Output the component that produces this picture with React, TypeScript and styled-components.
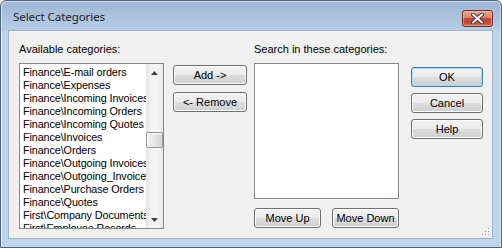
import React from "react";
import styled, { createGlobalStyle } from "styled-components";

const Global = createGlobalStyle`
  html, body { margin: 0; padding: 0; background: #ffffff; }
  body { width: 502px; height: 248px; overflow: hidden; }
`;

const Window = styled.div`
  box-sizing: border-box;
  width: 502px;
  height: 248px;
  border: 1px solid #4e6478;
  border-radius: 6px 6px 0 0;
  background: linear-gradient(#9eb6d3 0px, #b6cde7 29px, #bdd4ec 30px, #bfd5ed 100%);
  box-shadow: inset 1px 1px 0 rgba(255, 255, 255, 0.55), inset -1px 0 0 rgba(255, 255, 255, 0.4);
  display: flex;
  flex-direction: column;
  font-family: "Liberation Sans", Arial, sans-serif;
`;

const TitleBar = styled.div`
  height: 29px;
  display: flex;
  align-items: center;
  padding: 0 8px 0 12px;
`;

const Title = styled.div`
  flex: 1;
  font-family: "Noto Sans", "Open Sans", sans-serif;
  font-size: 11.6px;
  color: #1e1e1e;
  letter-spacing: -0.1px;
  margin-top: 1px;
`;

const CloseButton = styled.div`
  box-sizing: border-box;
  width: 31px;
  height: 17px;
  margin-top: 6px;
  border: 1px solid #6d2b22;
  border-radius: 3px;
  background: linear-gradient(#e8a597 0%, #d88371 45%, #c24a3a 50%, #c14b3b 80%, #d0725e 100%);
  box-shadow: inset 0 0 0 1px rgba(255, 210, 200, 0.45);
  display: flex;
  align-items: center;
  justify-content: center;
`;

const Frame = styled.div`
  flex: 1;
  padding: 0 8px 8px 7px;
  display: flex;
`;

const Client = styled.div`
  position: relative;
  box-sizing: border-box;
  flex: 1;
  background: #f0f0f0;
  border: 1px solid #9fb3c8;
  display: flex;
  align-items: flex-start;
  padding: 11px 0 0 10px;
  font-size: 11px;
  color: #000;
`;

const Column = styled.div<{ $w: number; $ml?: number; $mt?: number }>`
  width: ${(p) => p.$w}px;
  margin-left: ${(p) => p.$ml ?? 0}px;
  margin-top: ${(p) => p.$mt ?? 0}px;
  display: flex;
  flex-direction: column;
`;

const Label = styled.div`
  height: 14px;
  line-height: 14px;
  margin-bottom: 7px;
  white-space: nowrap;
`;

const ListBox = styled.div<{ $h: number }>`
  box-sizing: border-box;
  height: ${(p) => p.$h}px;
  border: 1px solid #828790;
  background: #ffffff;
  display: flex;
  overflow: hidden;
`;

const Items = styled.div`
  flex: 1;
  overflow: hidden;
  padding: 2px 0 0 3px;
`;

const Item = styled.div`
  height: 13px;
  line-height: 13px;
  font-size: 10.8px;
  letter-spacing: -0.1px;
  white-space: nowrap;
  overflow: hidden;
`;

const ScrollBar = styled.div`
  width: 17px;
  display: flex;
  flex-direction: column;
  background: linear-gradient(90deg, #e4e4e4, #f4f4f4 30%, #f4f4f4 70%, #e6e6e6);
`;

const Arrow = styled.div`
  height: 17px;
  display: flex;
  align-items: center;
  justify-content: center;
`;

const Track = styled.div`
  flex: 1;
  position: relative;
`;

const Thumb = styled.div`
  position: absolute;
  left: 0;
  right: 0;
  box-sizing: border-box;
  height: 16px;
  border: 1px solid #959595;
  border-radius: 2px;
  background: linear-gradient(90deg, #f3f3f3, #e6e6e6 50%, #d6d6d6);
  box-shadow: inset 1px 1px 0 #ffffff;
`;

const Button = styled.div<{ $w?: number; $default?: boolean }>`
  box-sizing: border-box;
  width: ${(p) => (p.$w ? `${p.$w}px` : "100%")};
  height: 20px;
  border: 1px solid ${(p) => (p.$default ? "#3c7fb1" : "#707070")};
  border-radius: 3px;
  background: linear-gradient(#f2f2f2 0%, #ebebeb 48%, #dddddd 52%, #cfcfcf 100%);
  box-shadow: inset 0 0 0 1px ${(p) => (p.$default ? "#a9dbf6" : "#fcfcfc")};
  display: flex;
  align-items: center;
  justify-content: center;
  font-size: 11px;
  line-height: 18px;
  color: #000;
  white-space: nowrap;
`;

const ButtonStack = styled.div<{ $gap: number }>`
  display: flex;
  flex-direction: column;
  gap: ${(p) => p.$gap}px;
`;

const ButtonRow = styled.div`
  display: flex;
  justify-content: space-between;
  margin-top: 9px;
`;

const Grip = styled.svg`
  position: absolute;
  right: 2px;
  bottom: 2px;
`;

const available = [
  "Finance\\E-mail orders",
  "Finance\\Expenses",
  "Finance\\Incoming Invoices",
  "Finance\\Incoming Orders",
  "Finance\\Incoming Quotes",
  "Finance\\Invoices",
  "Finance\\Orders",
  "Finance\\Outgoing Invoices",
  "Finance\\Outgoing_Invoices",
  "Finance\\Purchase Orders",
  "Finance\\Quotes",
  "First\\Company Documents",
  "First\\Employee Records",
];

export default function App() {
  return (
    <>
      <Global />
      <Window>
        <TitleBar>
          <Title>Select Categories</Title>
          <CloseButton>
            <svg width="15" height="11" viewBox="0 0 15 11">
              <path d="M3 1.5 L12 9.5 M12 1.5 L3 9.5" stroke="#4a3430" strokeWidth="4" strokeLinecap="round" />
              <path d="M3 1.5 L12 9.5 M12 1.5 L3 9.5" stroke="#ffffff" strokeWidth="2" strokeLinecap="round" />
            </svg>
          </CloseButton>
        </TitleBar>
        <Frame>
          <Client>
            <Column $w={145}>
              <Label>Available categories:</Label>
              <ListBox $h={166}>
                <Items>
                  {available.map((t) => (
                    <Item key={t}>{t}</Item>
                  ))}
                </Items>
                <ScrollBar>
                  <Arrow>
                    <svg width="7" height="4" viewBox="0 0 7 4">
                      <path d="M0 4 L3.5 0 L7 4 Z" fill="#404040" />
                    </svg>
                  </Arrow>
                  <Track>
                    <Thumb style={{ top: 51 }} />
                  </Track>
                  <Arrow>
                    <svg width="7" height="4" viewBox="0 0 7 4">
                      <path d="M0 0 L3.5 4 L7 0 Z" fill="#404040" />
                    </svg>
                  </Arrow>
                </ScrollBar>
              </ListBox>
            </Column>
            <Column $w={74} $ml={9} $mt={23}>
              <ButtonStack $gap={7}>
                <Button>Add -&gt;</Button>
                <Button>&lt;- Remove</Button>
              </ButtonStack>
            </Column>
            <Column $w={145} $ml={7}>
              <Label>Search in these categories:</Label>
              <ListBox $h={136} />
              <ButtonRow>
                <Button $w={67}>Move Up</Button>
                <Button $w={67}>Move Down</Button>
              </ButtonRow>
            </Column>
            <Column $w={72} $ml={12} $mt={25}>
              <ButtonStack $gap={6}>
                <Button $default>OK</Button>
                <Button>Cancel</Button>
                <Button>Help</Button>
              </ButtonStack>
            </Column>
            <Grip width="8" height="8" viewBox="0 0 8 8">
              {[
                [6, 0],
                [6, 3],
                [3, 3],
                [6, 6],
                [3, 6],
                [0, 6],
              ].map(([x, y]) => (
                <g key={`${x}-${y}`}>
                  <rect x={x + 1} y={y + 1} width="1" height="1" fill="#ffffff" />
                  <rect x={x} y={y} width="1" height="1" fill="#9a9a9a" />
                </g>
              ))}
            </Grip>
          </Client>
        </Frame>
      </Window>
    </>
  );
}
